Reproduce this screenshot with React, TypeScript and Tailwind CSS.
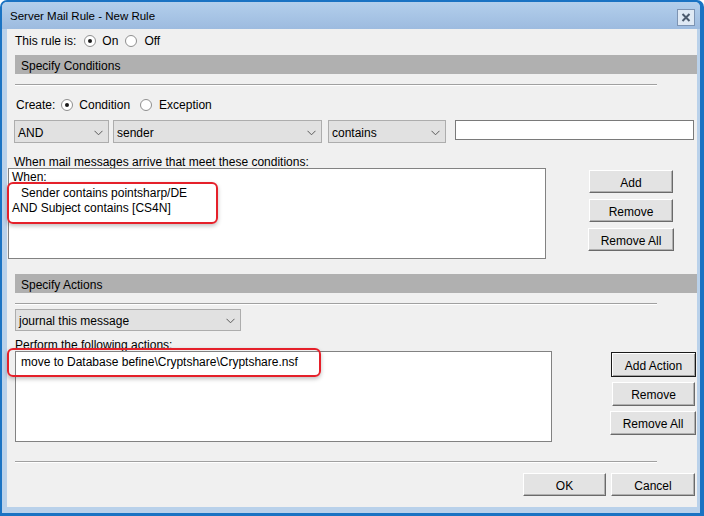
import React from "react";

const font = { fontFamily: '"Liberation Sans", Arial, sans-serif' };

function Radio({ checked }: { checked?: boolean }) {
  return (
    <span className="w-[12px] h-[12px] rounded-full border border-[#8f8f8f] bg-white flex items-center justify-center shrink-0">
      {checked && <span className="w-[4px] h-[4px] rounded-full bg-[#1a1a1a]" />}
    </span>
  );
}

function Chevron() {
  return (
    <svg width="9" height="6" viewBox="0 0 9 6" className="shrink-0">
      <path d="M0.5 0.8 L4.5 4.8 L8.5 0.8" fill="none" stroke="#5a5a5a" strokeWidth="1" />
    </svg>
  );
}

function Select({ label, className }: { label: string; className: string }) {
  return (
    <div
      className={`flex items-center justify-between border border-[#adadad] bg-[#e1e1e1] pl-[3px] pr-[5px] pt-[2px] text-[12px] text-black ${className}`}
    >
      <span>{label}</span>
      <Chevron />
    </div>
  );
}

function Btn({ label, className, def }: { label: string; className: string; def?: boolean }) {
  return (
    <div
      className={`flex items-center justify-center pt-[2px] text-[12px] text-black bg-[#e3e3e3] ${
        def
          ? "border border-[#1a1a1a] shadow-[inset_1px_1px_0_#ffffff,inset_-1px_-1px_0_#a0a0a0]"
          : "border border-t-white border-l-white border-r-[#6a6a6a] border-b-[#6a6a6a] shadow-[inset_-1px_-1px_0_#b0b0b0]"
      } ${className}`}
    >
      {label}
    </div>
  );
}

function Separator() {
  return <div className="ml-[8px] w-[642px] h-[2px] border-t border-t-[#a0a0a0] border-b border-b-white shrink-0" />;
}

function SectionBar({ label, className }: { label: string; className: string }) {
  return (
    <div className={`ml-[8px] h-[19px] bg-[#b0b0b0] flex items-center pl-[6px] pt-[2px] text-[12px] text-black shrink-0 ${className}`}>
      {label}
    </div>
  );
}

export default function App() {
  return (
    <div style={font} className="w-[704px] h-[516px] bg-[#1a73c3] rounded-t-[7px] pt-[2px] pl-[2px] pr-[4px] pb-[3px] flex flex-col">
      <div className="flex-1 bg-[#b9d1ea] rounded-t-[5px] flex flex-col">
        {/* Title bar */}
        <div className="h-[27px] shrink-0 rounded-t-[5px] bg-gradient-to-b from-[#b3cfec] to-[#9dbbdf] flex items-center justify-between pl-[8px] pr-[5px]">
          <span className="text-[11.5px] text-black mt-[3px]">Server Mail Rule - New Rule</span>
          <div className="mt-[4px] w-[18px] h-[17px] border border-[#7d94b3] bg-[#dfe9f4] flex items-center justify-center">
            <svg width="10" height="9" viewBox="0 0 10 9">
              <path d="M1.5 1 L8.5 8 M8.5 1 L1.5 8" stroke="#4b5a6d" strokeWidth="2" />
            </svg>
          </div>
        </div>
        {/* Content */}
        <div className="ml-[5px] w-[690px] h-[478px] bg-[#f0f0f0] flex flex-col text-[12px] text-black">
          {/* This rule is */}
          <div className="mt-[4px] h-[16px] pl-[8px] flex items-center shrink-0">
            <span>This rule is:</span>
            <span className="ml-[8px]"><Radio checked /></span>
            <span className="ml-[6px]">On</span>
            <span className="ml-[7px]"><Radio /></span>
            <span className="ml-[7px]">Off</span>
          </div>

          <SectionBar label="Specify Conditions" className="mt-[6px]" />
          <div className="mt-[10px]"><Separator /></div>

          {/* Create */}
          <div className="mt-[11px] h-[16px] pl-[9px] flex items-center shrink-0">
            <span>Create:</span>
            <span className="ml-[6px]"><Radio checked /></span>
            <span className="ml-[6px]">Condition</span>
            <span className="ml-[10px]"><Radio /></span>
            <span className="ml-[7px]">Exception</span>
          </div>

          {/* Selects */}
          <div className="mt-[7px] h-[23px] pl-[7px] flex items-start shrink-0">
            <Select label="AND" className="w-[95px] h-[23px]" />
            <Select label="sender" className="ml-[4px] w-[209px] h-[23px]" />
            <Select label="contains" className="ml-[6px] w-[118px] h-[23px]" />
            <div className="ml-[9px] w-[239px] h-[20px] bg-white border border-[#7a7a7a]" />
          </div>

          <div className="mt-[11px] h-[14px] leading-[16px] pl-[7px] shrink-0">
            When mail messages arrive that meet these conditions:
          </div>

          {/* Conditions list + buttons */}
          <div className="flex shrink-0">
            <div className="relative ml-[1px] w-[538px] h-[91px] bg-white border border-[#828282] pl-[3px] pt-[1px] leading-[15px]">
              <div className="mb-[1px]">When:</div>
              <div className="pl-[9px]">Sender contains pointsharp/DE</div>
              <div>AND Subject contains [CS4N]</div>
              <div className="absolute left-[-2px] top-[13px] w-[211px] h-[42px] border-2 border-[#e5202a] rounded-[6px] shadow-[0_2px_4px_rgba(0,0,0,0.25)]" />
            </div>
            <div className="ml-[42px] w-[86px] flex flex-col items-center">
              <Btn label="Add" className="mt-[2px] w-[84px] h-[23px]" />
              <Btn label="Remove" className="mt-[6px] w-[84px] h-[23px]" />
              <Btn label="Remove All" className="mt-[6px] w-[86px] h-[23px]" />
            </div>
          </div>

          <SectionBar label="Specify Actions" className="mt-[15px]" />
          <div className="mt-[10px]"><Separator /></div>

          <div className="mt-[4px] pl-[8px] shrink-0">
            <Select label="journal this message" className="w-[226px] h-[22px]" />
          </div>

          <div className="mt-[6px] h-[14px] leading-[16px] pl-[8px] shrink-0">Perform the following actions:</div>

          {/* Actions list + buttons */}
          <div className="flex shrink-0">
            <div className="relative ml-[8px] w-[537px] h-[91px] bg-white border border-[#828282] pl-[5px] pt-[3px] leading-[15px]">
              <div>move to Database befine\Cryptshare\Cryptshare.nsf</div>
              <div className="absolute left-[-9px] top-[-4px] w-[314px] h-[29px] border-2 border-[#e5202a] rounded-[6px] shadow-[0_2px_4px_rgba(0,0,0,0.25)]" />
            </div>
            <div className="ml-[58px] w-[86px] flex flex-col">
              <Btn def label="Add Action" className="mt-[1px] ml-[1px] w-[85px] h-[25px]" />
              <Btn label="Remove" className="mt-[5px] ml-[2px] w-[83px] h-[24px]" />
              <Btn label="Remove All" className="mt-[5px] w-[86px] h-[24px]" />
            </div>
          </div>

          <div className="mt-[19px]"><Separator /></div>

          <div className="mt-[10px] flex justify-end pr-[2px] shrink-0">
            <Btn label="OK" className="w-[83px] h-[23px]" />
            <Btn label="Cancel" className="ml-[5px] w-[84px] h-[23px]" />
          </div>
        </div>
      </div>
    </div>
  );
}
